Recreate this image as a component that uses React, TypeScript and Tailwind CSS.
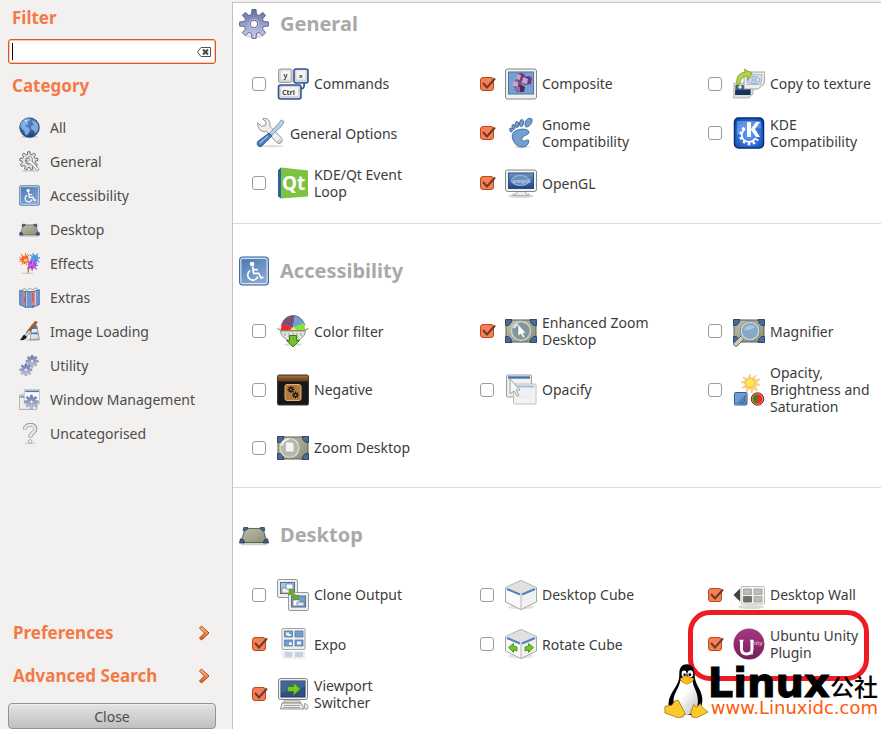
import React from 'react';

function gear(cx: number, cy: number, outer: number, inner: number, teeth: number, hole: number) {
  const points: string[] = [];
  const step = (Math.PI * 2) / teeth;
  for (let i = 0; i < teeth; i++) {
    const a = i * step - Math.PI / 2;
    const corners: [number, number][] = [
      [inner, -0.32],
      [outer, -0.18],
      [outer, 0.18],
      [inner, 0.32],
    ];
    corners.forEach(([r, k]) => {
      points.push(`${(cx + r * Math.cos(a + k * step)).toFixed(2)} ${(cy + r * Math.sin(a + k * step)).toFixed(2)}`);
    });
  }
  return `M${points.join('L')}Z M${cx - hole} ${cy}a${hole} ${hole} 0 1 0 ${hole * 2} 0a${hole} ${hole} 0 1 0 ${-hole * 2} 0Z`;
}

function IconDefs() {
  return (
    <svg width="0" height="0" className="absolute" aria-hidden="true">
      <defs>
        <linearGradient id="gearFill" x1="0" y1="0" x2="0" y2="1">
          <stop offset="0" stopColor="#6071a2" />
          <stop offset="1" stopColor="#cfcfee" />
        </linearGradient>
        <linearGradient id="blueFill" x1="0" y1="0" x2="0.6" y2="1">
          <stop offset="0" stopColor="#4a76b0" />
          <stop offset="1" stopColor="#86a9d4" />
        </linearGradient>
        <linearGradient id="darkBlue" x1="0" y1="0" x2="0" y2="1">
          <stop offset="0" stopColor="#6d94c6" />
          <stop offset="1" stopColor="#1f4585" />
        </linearGradient>
        <linearGradient id="silver" x1="0" y1="0" x2="1" y2="1">
          <stop offset="0" stopColor="#ffffff" />
          <stop offset="1" stopColor="#cfd0ce" />
        </linearGradient>
        <linearGradient id="olive" x1="0" y1="0" x2="1" y2="1">
          <stop offset="0" stopColor="#bec0a8" />
          <stop offset="1" stopColor="#8b8e78" />
        </linearGradient>
        <linearGradient id="brown" x1="0" y1="0" x2="0" y2="1">
          <stop offset="0" stopColor="#a8763a" />
          <stop offset="1" stopColor="#5a3713" />
        </linearGradient>
        <linearGradient id="unity" x1="0" y1="0" x2="0" y2="1">
          <stop offset="0" stopColor="#a43a80" />
          <stop offset="1" stopColor="#7a1d5c" />
        </linearGradient>
        <linearGradient id="arrowFill" x1="0" y1="0" x2="0" y2="1">
          <stop offset="0" stopColor="#fbd08a" />
          <stop offset="1" stopColor="#e4501c" />
        </linearGradient>
        <linearGradient id="tuxBelly" x1="0" y1="0" x2="1" y2="1">
          <stop offset="0.4" stopColor="#ffffff" />
          <stop offset="1" stopColor="#bdbdbd" />
        </linearGradient>
        <radialGradient id="globeFill" cx="0.35" cy="0.3" r="0.75">
          <stop offset="0" stopColor="#5d92d2" />
          <stop offset="1" stopColor="#173f80" />
        </radialGradient>
        <radialGradient id="kdeFill" cx="0.5" cy="0.55" r="0.65">
          <stop offset="0" stopColor="#63a3ff" />
          <stop offset="1" stopColor="#0d47b4" />
        </radialGradient>
      </defs>
    </svg>
  );
}

const corners = (
  <path
    d="M0.5 4.5h6.500l-1 3.500-2.500 2.500h-3z M31.500 4.500h-6.500l1 3.500 2.500 2.500h3z M0.500 27.500h6.500l-1-3.500-2.500-2.500h-3z M31.500 27.500h-6.500l1-3.500 2.500-2.500h3z"
    fill="#4a6898"
    stroke="#24375c"
    strokeWidth="0.8"
  />
);

const cubeBody = (
  <>
    <ellipse cx="16" cy="28" rx="13" ry="2.500" fill="#000" opacity="0.1" />
    <path d="M0.500 8.500L16 1.500 31.500 8.500V23L16 30.500 0.500 23z" fill="#f1f1f0" stroke="#a5a7a2" strokeLinejoin="round" />
    <path d="M1 8.500L16 2 31 8.500 16 15z" fill="#e0e0de" />
    <path d="M1.500 9L16 15v15L1.500 22.500z" fill="#fafafa" />
    <path d="M2 10L15 15.500M17 15.500L30 10" fill="none" stroke="#5580ba" strokeWidth="2.200" />
    <path d="M16 15v15" stroke="#b5b5b5" />
  </>
);

const icons: Record<string, React.ReactNode> = {
  gear: (
    <>
      <ellipse cx="16" cy="29" rx="10" ry="2" fill="#000" opacity="0.13" />
      <path d={gear(16, 16, 15.5, 10.5, 8, 4)} fill="url(#gearFill)" stroke="#596084" strokeLinejoin="round" fillRule="evenodd" />
      <circle cx="16" cy="16" r="5" fill="none" stroke="#c9cce6" strokeWidth="0.800" />
    </>
  ),
  globe: (
    <>
      <ellipse cx="16" cy="30" rx="12" ry="2" fill="#000" opacity="0.2" />
      <circle cx="16" cy="16" r="15" fill="url(#globeFill)" stroke="#1d4582" />
      <path
        d="M3 10L7 5l6-3 5 1-2 3-3 1 1 3-4 2 0 3 4 1 3 3-2 5-3 4-3-2-1-5-4-4-2-3z M19 5l6 1 4 5 1 5-2 6-4 4-1-5-4-2-1-5 4-2-1-3z"
        fill="#96bce6"
        opacity="0.8"
      />
      <path d="M9 4l4 1-3 3z" fill="#e7f1fb" />
    </>
  ),
  gearTool: (
    <>
      <ellipse cx="17" cy="30" rx="13" ry="1.500" fill="#000" opacity="0.15" />
      <path d={gear(15, 15, 14, 10, 9, 5)} fill="#e3e3e1" stroke="#555753" strokeWidth="1.300" fillRule="evenodd" />
      <path d="M11 12c2-4 7-4 9-1l0 5 10 11c1 2-1 4-3 2L17 19c-4 1-7-2-6-5l4 2 2-2-2-3z" fill="#fafafa" stroke="#70726e" strokeWidth="1.200" />
    </>
  ),
  access: (
    <>
      <rect x="0.5" y="1" width="31" height="30" rx="3" fill="#6e93c2" stroke="#3a639e" />
      <rect x="2" y="2.500" width="28" height="27" rx="2" fill="url(#blueFill)" stroke="#d5e3f3" strokeWidth="1.200" />
      <circle cx="14" cy="8.500" r="2.500" fill="#fff" />
      <path d="M14.500 11l1 7.500h5.500l2.500 5 2.500-1M15 14.500h5" fill="none" stroke="#fff" strokeWidth="1.800" />
      <path d="M12 15.500a5.500 5.500 0 1 0 8 6.500" fill="none" stroke="#fff" strokeWidth="1.700" />
    </>
  ),
  desk: (
    <>
      <path d="M2 25.500h28" stroke="#000" strokeWidth="3" opacity="0.18" />
      <path d="M6.500 9h19l4.500 15H2z" fill="url(#olive)" stroke="#585b4b" />
      <path d="M5 8h4.500l-1 2.500-4 1z M27 8h-4.500l1 2.500 4 1z" fill="#4a6898" stroke="#24375c" strokeWidth="0.800" />
      <path d="M1.500 20l3.500 1 1 3.500H0.500z M30.500 20l-3.500 1-1 3.500h5.500z" fill="#3d598a" stroke="#24375c" strokeWidth="0.800" />
    </>
  ),
  fireworks: (
    <>
      <ellipse cx="13" cy="31" rx="10" ry="1.200" fill="#000" opacity="0.15" />
      <path d="M14 30l1-13" stroke="#c28a2b" strokeWidth="2.500" />
      <circle cx="9" cy="10" r="6" fill="#f68a35" />
      <circle cx="24" cy="8" r="5.500" fill="#5a9be0" />
      <circle cx="20" cy="18" r="6.500" fill="#b658e0" />
      <path d="M9 10L0 7M9 10L3 1M9 10L10 0M9 10L16 2M9 10L0 13M9 10L4 18M9 10L12 19" stroke="#f57a22" strokeWidth="1.500" />
      <path d="M9 10L5 4M9 10L1 10M9 10L14 6M9 10L8 17M9 10L13 2" stroke="#e63d4f" strokeWidth="1.200" />
      <circle cx="10" cy="11" r="2.500" fill="#ffd449" />
      <path d="M24 8L17 3M24 8L21 0M24 8L29 1M24 8L32 7M24 8L31 14M24 8L27 17" stroke="#4a97e4" strokeWidth="1.800" />
      <path d="M20 18L13 12M20 18L18 9M20 18L25 11M20 18L29 19M20 18L27 25M20 18L20 27M20 18L13 24" stroke="#9a3fe0" strokeWidth="1.800" />
      <path d="M20 17l5 6M20 18l-6 2M20 18l2-7" stroke="#f07bd8" strokeWidth="1.500" />
    </>
  ),
  books: (
    <>
      <path d="M4 5l4-3 4 3 4-3 5 2 5-3 3 4v4H3z" fill="#ececea" stroke="#777" />
      <path d="M1 5l9 2v24L1 27z M10 7h11v24H10z M21 7l10-3v23l-10 4z" fill="#6b9ad2" stroke="#2d578f" />
      <path d="M6 7l3 0.500v21l-3-1.500z M19 8l5-1v20l-5 2z" fill="#ef7b72" />
      <path d="M11 8v22M25 7v21" stroke="#e5e9ee" strokeWidth="1.300" />
      <path d="M8 15v8M21 9v13" stroke="#b8413e" strokeWidth="1.200" />
    </>
  ),
  brush: (
    <>
      <ellipse cx="21" cy="29" rx="11" ry="1.500" fill="#000" opacity="0.18" />
      <path d="M20 6l7 1 4 21H17z" fill="url(#silver)" stroke="#747672" />
      <path d="M19 7h8l1 5-9 0z M18 18l10-1 1 3H17z" fill="#4b7eba" />
      <path d="M25 0l3 2L14 20l-3-3z" fill="#ad641c" stroke="#6e3a0b" strokeWidth="0.700" />
      <path d="M15 14l3 2-7 9-3-3z" fill="#cfd1cd" stroke="#555" strokeWidth="0.600" />
      <path d="M8 21l4 3c-1 4-6 6-11 5 4-2 3-6 7-8z" fill="#1c1c1c" />
    </>
  ),
  gears: (
    <>
      <path d={gear(20, 9.5, 9.5, 6.5, 8, 2.5)} fill="url(#gearFill)" stroke="#6b7295" strokeWidth="0.7" fillRule="evenodd" />
      <path d={gear(10.5, 22.5, 9.5, 6.5, 8, 2.5)} fill="url(#gearFill)" stroke="#7b82a3" strokeWidth="0.7" fillRule="evenodd" />
    </>
  ),
  windows: (
    <>
      <rect x="0.5" y="9" width="27" height="22" rx="1" fill="#f0f0ef" stroke="#858783" />
      <rect x="8" y="0.5" width="23.500" height="22" rx="1" fill="#fafafa" stroke="#a5a7a3" />
      <path d="M9.500 3.500h21" stroke="#4f79b3" strokeWidth="2.500" />
      <path d="M2 12h6" stroke="#4f79b3" strokeWidth="2" />
      <path d={gear(19, 19.5, 10.5, 7, 8, 2.5)} fill="url(#gearFill)" stroke="#69739a" strokeWidth="0.7" fillRule="evenodd" />
    </>
  ),
  question: (
    <>
      <ellipse cx="17" cy="31" rx="9" ry="1.200" fill="#000" opacity="0.15" />
      <path d="M9 10c0-9 16-10 16-1 0 6-8 6-8 13" fill="none" stroke="#8f918d" strokeWidth="6" />
      <path d="M9 9.500c1-8 15-9 15.500-0.500 0 6-7.500 6-7.500 12.500" fill="none" stroke="#e8e8e7" strokeWidth="4" />
      <circle cx="17" cy="28" r="2.800" fill="#ececeb" stroke="#8f918d" />
    </>
  ),
  keys: (
    <>
      <path d="M27 15c1 5-1 6-5 6" fill="none" stroke="#2d5596" strokeWidth="1.800" />
      <rect x="1.500" y="1" width="13.500" height="13.500" rx="1.500" fill="#d5d5d2" stroke="#9a9c97" />
      <rect x="17" y="1" width="14" height="14" rx="2" fill="#d5d5d2" stroke="#2d5596" strokeWidth="1.600" />
      <rect x="1.500" y="17" width="22.500" height="14" rx="2" fill="#d5d5d2" stroke="#2d5596" strokeWidth="1.600" />
      <rect x="4" y="2.500" width="9" height="9" rx="1" fill="#f4f4f1" />
      <rect x="19.500" y="2.500" width="9" height="9" rx="1" fill="#f4f4f1" />
      <rect x="4" y="19" width="17" height="9" rx="1" fill="#f4f4f1" />
      <text x="6.500" y="9.500" fontSize="7" fontWeight="bold" fill="#444">y</text>
      <text x="22" y="9.500" fontSize="6" fontWeight="bold" fill="#444">x</text>
      <text x="5" y="26.500" fontSize="7" fontWeight="bold" fill="#444">Ctrl</text>
    </>
  ),
  tools: (
    <>
      <ellipse cx="18" cy="30" rx="13" ry="1.500" fill="#000" opacity="0.12" />
      <path
        d="M3 5l4 4 4-1 1-4-4-3c5-2 9 2 8 8l12 12c3 4-1 8-5 5L12 14C7 16 2 11 3 5z"
        fill="#eeeeec"
        stroke="#8b8d89"
      />
      <circle cx="26" cy="25" r="1.300" fill="#fff" stroke="#888" strokeWidth="0.700" />
      <path d="M28 2l3 2-3 5-11 10-2-2L25 6z" fill="#bcd0e8" stroke="#7690b4" />
      <path d="M15 16l3 3L7 30c-3 2-6-2-4-5z" fill="#4a7ebd" stroke="#204a87" />
      <path d="M14 19L5 27" stroke="#9dbde2" strokeWidth="1.500" />
    </>
  ),
  qt: (
    <>
      <path d="M4 0.500L31 3.500v26L4 31.500z" fill="#7ec242" />
      <path d="M4 0.500L1 3v26.500l3 2z" fill="#2a64a0" />
      <text x="5" y="23" fontSize="19" fontWeight="bold" fill="#fff">Qt</text>
    </>
  ),
  composite: (
    <>
      <rect x="0.5" y="1" width="31" height="30" rx="2" fill="#f0f0ee" stroke="#858783" />
      <rect x="3.500" y="4" width="25" height="22" fill="#74a0d3" stroke="#4d759f" />
      <path d="M12 6l5-1 3 2-1 5-5 2-3-3z" fill="#6a3976" />
      <path d="M8 13l6-1 3 2-1 6-6 0-2-2z" fill="#7a4a86" />
      <path d="M18 9l6-1 3 2-1 6-6 1-3-2z" fill="#6a3976" />
      <path d="M11 18l6-1 3 2-1 5-6 0-3-2z" fill="#4f2a5c" />
      <path d="M8 13l5 1 0 5-5-1z M18 9l5 2-1 5-5-1z M12 6l4 1-1 5-4-1z" fill="#c9a4cf" />
      <path d="M11 18l4 1 0 5-5-2z" fill="#98709f" />
    </>
  ),
  foot: (
    <>
      <ellipse cx="17" cy="30" rx="8" ry="1.500" fill="#000" opacity="0.12" />
      <g fill="#729fcf" stroke="#41699f" strokeWidth="0.9">
        <path d="M8 16c4-5 15-5 16-1 0 3-5 3-7 6-1 3 2 4 5 2 3-1 2 4-1 6-6 3-11-1-13-6-1-3-1-5 0-7z" />
        <path d="M20 7c0-5 5-7 7-5 1 4-3 8-5 8-2 0-2-1-2-3z" />
        <ellipse cx="16.500" cy="6" rx="2" ry="3.500" transform="rotate(12 16.500 6)" />
        <ellipse cx="12" cy="7.500" rx="1.800" ry="3" />
        <ellipse cx="8.500" cy="10" rx="1.500" ry="2.500" transform="rotate(-12 8.500 10)" />
        <ellipse cx="6" cy="13" rx="1.200" ry="1.900" transform="rotate(-25 6 13)" />
      </g>
    </>
  ),
  opengl: (
    <>
      <ellipse cx="16" cy="29" rx="13" ry="2" fill="#000" opacity="0.15" />
      <path d="M12 24h8l1 3h3v1.500H8V27h3z" fill="#eee" stroke="#999" strokeWidth="0.700" />
      <rect x="0.5" y="3" width="31" height="21.500" rx="2" fill="#f2f2f0" stroke="#858783" />
      <rect x="3.500" y="6" width="25" height="15.500" fill="url(#darkBlue)" stroke="#294e86" />
      <ellipse cx="15.500" cy="13.500" rx="9" ry="5" fill="#6d8fc0" stroke="#a9c2e0" strokeWidth="0.900" />
      <text x="7.500" y="15.500" fontSize="6" fontWeight="bold" fill="#b3cae6">ompiz</text>
    </>
  ),
  copyTexture: (
    <>
      <path d="M1 15h19v11l-4 4H0.500z" fill="#dededa" stroke="#a0a29e" strokeWidth="0.700" />
      <path d="M2.500 17h15v10H2z" fill="#3b5f91" />
      <path d="M2.500 22h15v5H2z" fill="#18345d" />
      <path d="M11 4h21l-1 12-6 5H11z" fill="#eeeeec" stroke="#8c8e8a" strokeWidth="0.800" />
      <path d="M14 6.500h15l-1 10H14z" fill="#d7e2ed" stroke="#9ba8b5" strokeWidth="0.700" />
      <ellipse cx="21" cy="12" rx="6" ry="3.500" fill="none" stroke="#83a4cd" />
      <path d="M18 11h6M18 13h6" stroke="#83a4cd" />
      <path d="M4 17C2 8 8 4 13 4L11 1l8 4-4 7-1-4C10 8 7 11 7 16z" fill="#b4d34b" stroke="#7b9a25" strokeWidth="0.800" />
      <circle cx="7" cy="19" r="1.800" fill="#e9f1bd" />
    </>
  ),
  kde: (
    <>
      <rect x="1.500" y="1" width="29" height="30" rx="4" fill="url(#kdeFill)" stroke="#0a2d6f" strokeWidth="1.500" />
      <path d="M4 4h24v8C20 9 12 12 4 18z" fill="#9cc3ff" opacity="0.45" />
      <path d="M12 12c-5 4-4 11 2 12.500 4 1 7-1 8.500-3.500" fill="none" stroke="#fff" strokeWidth="1.800" />
      <path
        d="M11.500 11c-6 5-5 13 3 15.500 5 1 8-1 10-4.500"
        fill="none"
        stroke="#fff"
        strokeWidth="3"
        strokeDasharray="2.500 2.500"
      />
      <path d="M14 5h4v7l5-7h4l-5 7 5 8h-4l-5-7v7h-4z" fill="#fff" />
    </>
  ),
  colorFilter: (
    <>
      <ellipse cx="16" cy="29.500" rx="9" ry="1.500" fill="#000" opacity="0.15" />
      <path d="M16 13L5 9C7 3 11 0.500 18 0.500z" fill="#75507b" />
      <path d="M16 13L18 0.500c5 1 8 4 9 8z" fill="#729fcf" />
      <path d="M16 13L27 8l1.500 7.500H16z" fill="#8ae234" />
      <path d="M16 13L5 8.500l-1.500 7H16z" fill="#ef2929" />
      <path d="M16 12l-4 4h9z" fill="#fce94f" />
      <path d="M4 11C6 4 10 1 16 0.500c6 0 10 4 12 10" fill="none" stroke="#71606c" strokeWidth="0.800" />
      <path d="M3.500 16h25C28 22 22 26 16 26S4 22 3.500 16z" fill="#e2e2df" stroke="#93958f" />
      <path d="M8 18v3M12 18v5M16 18v4M20 18v5M24 18v3" stroke="#b5b7b1" strokeWidth="1.500" />
      <path d="M0.500 13.500l4 2h23l4-2" fill="none" stroke="#858783" strokeWidth="1.200" />
      <path d="M12.500 20.500h7v5h3L16 32l-6.500-6.500h3z" fill="#73bf32" stroke="#3d7c0d" />
    </>
  ),
  negative: (
    <>
      <rect x="0.5" y="1" width="31" height="30" rx="1.500" fill="#17161a" stroke="#3c3632" />
      <rect x="1" y="1.500" width="30" height="6" fill="url(#brown)" />
      <rect x="8" y="10.500" width="16" height="16" rx="2" fill="#ae7a40" stroke="#e8ae67" />
      <path d={gear(14, 15.500, 3.500, 2.400, 8, 1)} fill="#1c1510" fillRule="evenodd" />
      <path d={gear(18.500, 21, 3.500, 2.400, 8, 1)} fill="#1c1510" fillRule="evenodd" />
    </>
  ),
  zoomDesktop: (
    <>
      <rect x="1" y="5" width="30" height="22" fill="url(#olive)" stroke="#5b5e4d" />
      {corners}
      <circle cx="12.500" cy="16" r="9.500" fill="#b5b8ab" stroke="#dcded3" strokeWidth="1.200" />
      <path d="M8.500 10h6.500l2 2v8H8.500z" fill="#f4f4f2" stroke="#a5a79f" strokeWidth="0.600" />
      <path d="M5 14a8 8 0 0 1 7-7" stroke="#fff" strokeWidth="2" fill="none" opacity="0.7" />
    </>
  ),
  enhancedZoom: (
    <>
      <rect x="1" y="5" width="30" height="22" fill="url(#olive)" stroke="#5b5e4d" />
      {corners}
      <circle cx="16" cy="16" r="9.500" fill="#82969b" stroke="#d1d7d0" strokeWidth="1.300" />
      <path d="M13 9l8 9-3 0 2 4-2 1-2-4-3 2z" fill="#fff" stroke="#777f80" strokeWidth="0.500" />
      <path d="M9 13a8 8 0 0 1 4-4" stroke="#dfe8e9" strokeWidth="2" fill="none" />
    </>
  ),
  magnifier: (
    <>
      <rect x="1" y="5" width="30" height="22" fill="url(#olive)" stroke="#5b5e4d" />
      {corners}
      <path d="M9 20l3 3-8 8c-2 1-4-1-3-3z" fill="#c8cac5" stroke="#63655f" />
      <circle cx="17" cy="16" r="9" fill="#84a9cb" stroke="#dadcd7" strokeWidth="1.500" />
      <circle cx="17" cy="16" r="9.800" fill="none" stroke="#747a7b" strokeWidth="0.700" />
      <path d="M11 15c2-5 7-6 11-3-3 2-6 4-11 3z" fill="#c4dbed" opacity="0.6" />
    </>
  ),
  opacify: (
    <>
      <rect x="1.500" y="1" width="25" height="22" rx="1" fill="#f1f1f0" stroke="#9b9d99" />
      <path d="M3 3.500h22" stroke="#4976b2" strokeWidth="2.500" />
      <rect x="8.500" y="10" width="22.500" height="20" rx="1" fill="#f2f2f2" stroke="#b9bbb8" opacity="0.9" />
      <path d="M10 12.500h19" stroke="#a5bde0" strokeWidth="2" />
      <path d="M5 5l10 11-4 0 3 5-2 1-3-5-4 3z" fill="#f6f6f6" stroke="#999" strokeWidth="0.900" />
    </>
  ),
  opacity: (
    <>
      <path d="M17 0l1 5 5-4-2 5 6-1-4 4 4 2-5 1 3 5-5-2-1 4-2-5-4 4 1-5-5 1 4-4-5-2 5-1-3-4 5 2z" fill="#fbd58f" stroke="#f4b55e" strokeWidth="0.600" />
      <circle cx="17" cy="9" r="4.500" fill="#fce94f" stroke="#f5ba45" />
      <rect x="1.500" y="18.500" width="12.500" height="12.500" rx="1" fill="#729fcf" stroke="#315c94" />
      <path d="M14 18.500V31H1.500z" fill="#5f87bb" />
      <path d="M6 29h7M9 26h4M11 23h2" stroke="#24446f" strokeDasharray="1 1" />
      <circle cx="24.500" cy="25" r="6.200" fill="#ee2e2a" stroke="#7d1a15" />
      <path d="M24.500 20a5 5 0 0 0 0 10z" fill="#3e8210" />
      <circle cx="24.500" cy="25" r="5.300" fill="none" stroke="#f8c1bd" strokeWidth="0.600" />
    </>
  ),
  clone: (
    <>
      <rect x="0.5" y="0.5" width="20" height="18" rx="1.500" fill="#eeeeec" stroke="#999b97" />
      <rect x="3.500" y="3.500" width="14" height="11" fill="#a9c4e3" stroke="#55718f" />
      <path d="M5 9h8v5H5z" fill="#f2f2f2" stroke="#777" strokeWidth="0.700" />
      <path d="M9 5h7v5H9z" fill="#fff" stroke="#55718f" strokeWidth="0.700" />
      <rect x="11.500" y="13.500" width="20" height="18" rx="1.500" fill="#eeeeec" stroke="#999b97" />
      <rect x="14.500" y="17" width="14" height="11" fill="#729fcf" stroke="#55718f" />
      <path d="M16 21h7v6h-7z" fill="#fff" stroke="#777" strokeWidth="0.700" />
      <path d="M20 23h7v4h-7z" fill="#d8e3ef" stroke="#55718f" strokeWidth="0.700" />
      <path d="M12 10.500h4.500v4l3 2 2-0.500v4.500h-5l1-2-3.500-3-2 0.500z" fill="#64b328" stroke="#4c8b1c" strokeWidth="0.600" />
    </>
  ),
  expo: (
    <>
      <rect x="5" y="0.500" width="23" height="21" rx="1" fill="#eeeeec" stroke="#a5a7a3" />
      <path d="M7.500 3h8v6h-8z M18 3h8v6h-8z M7.500 12h8v6h-8z M18 12h8v6h-8z" fill="#729fcf" stroke="#4c7199" strokeWidth="0.700" />
      <path d="M9 4.500h3v3H9z M11 6h3v2h-3z M12 14.500h3v2.500h-3z M20 13.500h4v3h-4z" fill="#eef2f6" />
      <path d="M5 23h23v8H5z" fill="#e1e4e8" opacity="0.6" />
      <path d="M8 24h7v5H8z M18 24h8v5h-8z" fill="#a9bfdb" opacity="0.6" />
    </>
  ),
  viewport: (
    <>
      <path d="M8 22h14l2 3H6z" fill="#d9dad7" stroke="#888" strokeWidth="0.700" />
      <rect x="1.500" y="0.500" width="29" height="21" rx="2" fill="#ededeb" stroke="#858783" />
      <rect x="4" y="3" width="24" height="16" fill="#2f4f85" stroke="#203860" />
      <path d="M4 3h24v6L4 15z" fill="#4f73a9" opacity="0.6" />
      <path d="M10.500 8.500h6v-4l7 6.500-7 6.500v-4h-6z" fill="#74c82e" stroke="#3c8108" />
      <path d="M5 25h19l3 6H3.500z" fill="#e9e9e7" stroke="#888a85" strokeWidth="0.900" />
      <path d="M7 27.500h16M6 29.500h17" stroke="#a6a8a3" />
      <path d="M27 26c2-1 4 1 4 3s-1 3-3 2z" fill="#e9e9e7" stroke="#777" strokeWidth="0.700" />
    </>
  ),
  cube: cubeBody,
  rotateCube: (
    <>
      {cubeBody}
      <path d="M3.500 19.500l5-4v2.500l3.500 1v4l-3.500-1v2.500z M28.500 19.500l-5-4v2.500l-3.500 1v4l3.500-1v2.500z" fill="#73c42a" stroke="#4e9018" strokeWidth="0.900" />
    </>
  ),
  wall: (
    <>
      <ellipse cx="18" cy="28" rx="13" ry="2" fill="#000" opacity="0.15" />
      <path d="M0.500 16L7 9.500v13z" fill="#3f413d" />
      <rect x="8" y="7.500" width="23.500" height="17.500" rx="1" fill="#f5f5f4" stroke="#b9bbb7" />
      <path d="M10.500 10h8v5.500h-8z M21 10h8v5.500h-8z M21 17.500h8V23h-8z" fill="#babdb6" stroke="#94978f" strokeWidth="0.700" />
      <path d="M10.500 17.500h8V23h-8z" fill="#6e706c" stroke="#555753" strokeWidth="0.700" />
    </>
  ),
  unity: (
    <>
      <circle cx="16" cy="16" r="15.500" fill="url(#unity)" />
      <path d="M8.500 12.500V21c0 3 1.500 5 5 5s5.500-2 5.500-5v-8.500" fill="none" stroke="#fff" strokeWidth="3" />
      <path d="M6.500 12.500h4M17 12.500h3.500M19 21v5.500" fill="none" stroke="#fff" strokeWidth="1.500" />
      <text x="19" y="16.500" fontSize="6" fill="#f0d7e8">nity</text>
    </>
  ),
};

interface IconProps {
  name: string;
  className: string;
}

function Icon({ name, className }: IconProps) {
  return (
    <svg viewBox="0 0 32 32" className={className} aria-hidden="true">
      {icons[name]}
    </svg>
  );
}

interface Plugin {
  label: string;
  icon: string;
  checked?: boolean;
  plain?: boolean;
  ringed?: boolean;
}

interface Section {
  title: string;
  icon: string;
  plugins: Plugin[];
}

const categories = [
  { label: 'All', icon: 'globe' },
  { label: 'General', icon: 'gearTool' },
  { label: 'Accessibility', icon: 'access' },
  { label: 'Desktop', icon: 'desk' },
  { label: 'Effects', icon: 'fireworks' },
  { label: 'Extras', icon: 'books' },
  { label: 'Image Loading', icon: 'brush' },
  { label: 'Utility', icon: 'gears' },
  { label: 'Window Management', icon: 'windows' },
  { label: 'Uncategorised', icon: 'question' },
];

const sections: Section[] = [
  {
    title: 'General',
    icon: 'gear',
    plugins: [
      { label: 'Commands', icon: 'keys' },
      { label: 'Composite', icon: 'composite', checked: true },
      { label: 'Copy to texture', icon: 'copyTexture' },
      { label: 'General Options', icon: 'tools', plain: true },
      { label: 'Gnome Compatibility', icon: 'foot', checked: true },
      { label: 'KDE Compatibility', icon: 'kde' },
      { label: 'KDE/Qt Event Loop', icon: 'qt' },
      { label: 'OpenGL', icon: 'opengl', checked: true },
    ],
  },
  {
    title: 'Accessibility',
    icon: 'access',
    plugins: [
      { label: 'Color filter', icon: 'colorFilter' },
      { label: 'Enhanced Zoom Desktop', icon: 'enhancedZoom', checked: true },
      { label: 'Magnifier', icon: 'magnifier' },
      { label: 'Negative', icon: 'negative' },
      { label: 'Opacify', icon: 'opacify' },
      { label: 'Opacity, Brightness and Saturation', icon: 'opacity' },
      { label: 'Zoom Desktop', icon: 'zoomDesktop' },
    ],
  },
  {
    title: 'Desktop',
    icon: 'desk',
    plugins: [
      { label: 'Clone Output', icon: 'clone' },
      { label: 'Desktop Cube', icon: 'cube' },
      { label: 'Desktop Wall', icon: 'wall', checked: true },
      { label: 'Expo', icon: 'expo', checked: true },
      { label: 'Rotate Cube', icon: 'rotateCube' },
      { label: 'Ubuntu Unity Plugin', icon: 'unity', checked: true, ringed: true },
      { label: 'Viewport Switcher', icon: 'viewport', checked: true },
    ],
  },
];

function PluginItem({ plugin }: { plugin: Plugin }) {
  if (plugin.plain) {
    return (
      <div className="flex min-h-[49px] items-center py-2 pl-[2px]">
        <button type="button" className="flex items-center gap-1">
          <Icon name={plugin.icon} className="h-[30px] w-[32px] shrink-0" />
          <span className="text-left leading-[17px]">{plugin.label}</span>
        </button>
      </div>
    );
  }
  return (
    <div className="relative flex min-h-[49px] items-center py-2">
      <label className="flex items-center">
        <span className="mr-[11px] grid shrink-0">
          <input
            type="checkbox"
            defaultChecked={plugin.checked}
            className="peer col-start-1 row-start-1 size-[14px] appearance-none rounded-[3px] border border-[#9c9c9a] bg-white checked:border-[#c0471c] checked:bg-[#f58055]"
          />
          <svg
            viewBox="0 0 16 14"
            className="pointer-events-none invisible col-start-1 row-start-1 -mr-[2px] h-[14px] w-[16px] peer-checked:visible"
            aria-hidden="true"
          >
            <path d="M3 6l4 4.500L15 1.500" fill="none" stroke="#6b3a28" strokeWidth="2" />
          </svg>
        </span>
        <Icon name={plugin.icon} className="mr-[5px] size-8 shrink-0" />
        <span className="w-[112px] leading-[17px]">{plugin.label}</span>
      </label>
      {plugin.ringed && (
        <span className="pointer-events-none absolute -top-[9px] -left-[20px] h-[71px] w-[181px] rounded-[22px] border-[5px] border-[#ed1c24]" />
      )}
    </div>
  );
}

function PluginSection({ section }: { section: Section }) {
  return (
    <section className="border-b border-[#dcdcdc] pt-8 pb-[15px] first:pt-[6px] last:border-b-0 last:pb-0">
      <h2 className="mb-5 flex h-[30px] items-center gap-[11px] pl-[6px] text-[20px] font-bold text-[#aaa9a8]">
        <Icon name={section.icon} className="size-[30px]" />
        {section.title}
      </h2>
      <div className="grid grid-cols-[228px_228px_1fr] pl-[19px]">
        {section.plugins.map((plugin) => (
          <PluginItem key={plugin.label} plugin={plugin} />
        ))}
      </div>
    </section>
  );
}

function ExpanderButton({ label }: { label: string }) {
  return (
    <button type="button" className="flex h-[43px] items-center justify-between pr-[6px] pl-[5px] text-[17px] font-bold text-[#f37a48]">
      {label}
      <svg viewBox="0 0 12 16" className="h-4 w-3" aria-hidden="true">
        <path d="M1.500 3l2-2 7.500 7-7.500 7-2-2L6.500 8z" fill="url(#arrowFill)" stroke="#bd3b10" strokeLinejoin="round" />
      </svg>
    </button>
  );
}

function Sidebar() {
  return (
    <aside className="flex w-[232px] shrink-0 flex-col pr-4 pl-2">
      <label htmlFor="filter" className="mt-[5px] mb-2 pl-1 text-[17px] leading-[26px] font-bold text-[#f37a48]">
        Filter
      </label>
      <div className="flex h-[25px] items-center rounded-[3px] border border-[#d45a2c] bg-white pr-1 pl-[3px] shadow-[inset_0_0_0_1px_#f9c5ae]">
        <span className="h-[17px] w-px bg-black" />
        <input id="filter" type="text" className="w-full min-w-0 flex-1 bg-transparent outline-none" />
        <button type="button" aria-label="Clear">
          <svg viewBox="0 0 14 10" className="h-[10px] w-[14px]" aria-hidden="true">
            <path d="M4 0.500h9.500v9H4L0.500 5z" fill="#fff" stroke="#555" />
            <path d="M6 2.500l5 5M11 2.500l-5 5" stroke="#444" strokeWidth="2" />
          </svg>
        </button>
      </div>
      <h2 className="mt-[9px] mb-[11px] pl-1 text-[17px] leading-[26px] font-bold text-[#f37a48]">Category</h2>
      <ul>
        {categories.map((category) => (
          <li key={category.label}>
            <button type="button" className="flex h-[34px] w-full items-center gap-[10px] pl-[11px] text-left text-[#4c4c4c]">
              <Icon name={category.icon} className="size-[21px] shrink-0" />
              {category.label}
            </button>
          </li>
        ))}
      </ul>
      <div className="mt-auto flex flex-col">
        <ExpanderButton label="Preferences" />
        <ExpanderButton label="Advanced Search" />
        <button
          type="button"
          className="mt-[6px] h-[26px] rounded-[4px] border border-[#929292] bg-linear-to-b from-[#e4e4e4] to-[#bfbfbf] text-[#4c4c4c] shadow-[inset_0_1px_0_#efefef]"
        >
          Close
        </button>
      </div>
    </aside>
  );
}

function Tux() {
  return (
    <svg viewBox="0 0 46 56" className="h-[54px] w-[44px] shrink-0" aria-hidden="true">
      <path d="M16 10c0-7 3-10 8-10s8 4 8 10c0 7 2 10 5 16 4 8 4 15 1 20l-8 7H13l-8-9c-1-5 1-11 5-17 4-6 6-9 6-17z" fill="#000" />
      <path d="M17 17l7 3 6-3c0 6 4 10 5 17 2 10-2 18-11 19-8 0-14-5-14-15 0-8 6-13 7-21z" fill="url(#tuxBelly)" />
      <ellipse cx="21" cy="10" rx="2.600" ry="3.500" fill="#fff" />
      <ellipse cx="27.500" cy="10" rx="3" ry="3.700" fill="#fff" />
      <circle cx="21.500" cy="11" r="1.300" />
      <circle cx="27" cy="11" r="1.500" />
      <path d="M17 15l6-3 8 3-1 3-6 3-6-3z" fill="#f8bd17" stroke="#a76a00" strokeWidth="0.600" />
      <path d="M1 44l7-1 4-5 3 0 7 13-2 4-5 1-14-5z" fill="#fcc92c" stroke="#9d7000" strokeWidth="0.800" />
      <path d="M31 42l3 3 4-4 2 4 6 5-12 6-5-1-1-5z" fill="#fcc92c" stroke="#9d7000" strokeWidth="0.800" />
    </svg>
  );
}

function Watermark() {
  return (
    <div className="pointer-events-none absolute right-[3px] bottom-[11px] flex items-end pt-1">
      <Tux />
      <div className="flex flex-col">
        <div className="flex items-end justify-between text-black">
          <span className="font-['DejaVu_Sans',sans-serif] text-[40px] leading-[30px] font-bold [-webkit-text-stroke:1px_black]">Linux</span>
          <span className="font-['Noto_Sans_CJK_SC',sans-serif] text-[24px] leading-[24px] font-medium">公社</span>
        </div>
        <span className="pl-[3px] font-['DejaVu_Sans',sans-serif] text-[18px] leading-[20px] text-[#ff5a0a]">
          www.Linuxidc.com
        </span>
      </div>
    </div>
  );
}

export default function App() {
  return (
    <div className="relative flex min-h-screen bg-[#f2f1f0] font-['Noto_Sans',sans-serif] text-[14px] text-[#3c3c3c]">
      <IconDefs />
      <Sidebar />
      <main className="mt-[2px] min-w-0 flex-1 border-t border-l border-[#c3c3c3] bg-white">
        {sections.map((section) => (
          <PluginSection key={section.title} section={section} />
        ))}
      </main>
      <Watermark />
    </div>
  );
}
